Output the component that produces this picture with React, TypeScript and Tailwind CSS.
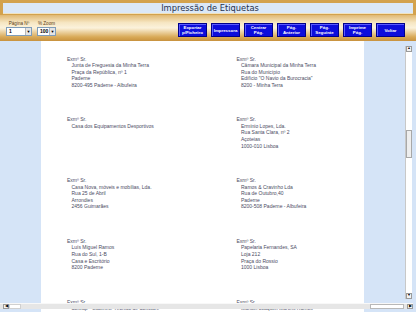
import React from "react";

type Etiqueta = string[];

const esquerda: Etiqueta[] = [
    ["Junta de Freguesia da Minha Terra", "Praça da República, nº 1", "Paderne", "8200-495 Paderne - Albufeira"],
    ["Casa dos Equipamentos Desportivos"],
    ["Casa Nova, móveis e mobílias, Lda.", "Rua 25 de Abril", "Arrondies", "2456 Guimarães"],
    ["Luís Miguel Ramos", "Rua do Sul, 1-B", "Casa e Escritório", "8200 Paderne"],
    ["Softrap - Gabinete Técnico de Software"],
];

const direita: Etiqueta[] = [
    ["Câmara Municipal da Minha Terra", "Rua do Município", "Edifício \"O Navio da Burocracia\"", "8200 - Minha Terra"],
    ["Ermínio Lopes, Lda.", "Rua Santa Clara, nº 2", "Açoteias", "1000-010 Lisboa"],
    ["Ramos & Cravinho Lda", "Rua de Outubro,40", "Paderne", "8200-508 Paderne - Albufeira"],
    ["Papelaria Fernandes, SA", "Loja 212", "Praça do Rossio", "1000 Lisboa"],
    ["Manuel Joaquim Martins Ramos"],
];

const botoes = [
    ["Exportar", "p/Ficheiro"],
    ["Impressora"],
    ["Centrar", "Pág."],
    ["Pág.", "Anterior"],
    ["Pág.", "Seguinte"],
    ["Imprime", "Pág."],
    ["Voltar"],
];

const Seletor: React.FC<{ label: string; value: string; width: string }> = ({ label, value, width }) => (
    <div className="flex flex-col items-center">
        <span className="text-[4.6px] leading-[6px] text-[#5a3a10]">{label}</span>
        <div className={`flex h-[9px] border border-[#7f9db9] bg-white ${width}`}>
            <span className="flex-1 pl-[2px] text-[5px] leading-[7px] font-bold text-black">{value}</span>
            <span className="w-[6px] bg-[#e4e4e4] border-l border-[#b8b8b8] flex items-center justify-center text-[4px] text-black">▼</span>
        </div>
    </div>
);

const Bloco: React.FC<{ linhas: Etiqueta }> = ({ linhas }) => (
    <div className="h-[60.75px]">
        <div>Exmº Sr.</div>
        {linhas.map((l, i) => (
            <div key={i} className="pl-[4.5px] whitespace-nowrap">{l}</div>
        ))}
    </div>
);

export default function App() {
    return (
        <div className="relative w-[416px] h-[312px] overflow-hidden bg-white font-['Liberation_Sans',Arial,sans-serif]">
            {/* cabeçalho */}
            <div className="h-[41px] bg-[linear-gradient(180deg,#c88f3a_0%,#d8a857_30%,#f6e6c2_55%,#fbf2dc_68%,#d9aa58_90%,#c8923e_100%)]">
                <div className="px-[3px] pt-[3px] pb-[1px] bg-[#d3a24d]">
                    <div className="h-[11px] bg-[#dbe8f7] border-b border-[#f1e3c0] flex items-center justify-center">
                        <span className="ml-[4px] font-['DejaVu_Sans',Verdana,sans-serif] text-[8.3px] leading-[10px] text-[#25324f]">
                            Impressão de Etiquetas
                        </span>
                    </div>
                </div>
                <div className="flex items-start px-[6px] pt-[6px]">
                    <div className="flex gap-[5px]">
                        <Seletor label="Página Nº" value="1" width="w-[26px]" />
                        <Seletor label="% Zoom" value="100" width="w-[19px]" />
                    </div>
                    <div className="ml-[122px] mt-[2px] flex gap-[4px]">
                        {botoes.map((b, i) => (
                            <div
                                key={i}
                                className="w-[29px] h-[14px] bg-[#0d0ddc] border border-[#00008a] shadow-[inset_1px_1px_0_#5a5aff] flex flex-col items-center justify-center text-white text-[4.4px] leading-[5px] font-bold"
                            >
                                {b.map((t, j) => (
                                    <span key={j}>{t}</span>
                                ))}
                            </div>
                        ))}
                    </div>
                </div>
            </div>

            {/* área de pré-visualização */}
            <div className="flex h-[271px]">
                <div className="w-[41px] bg-[#d5e4f7]" />
                <div className="w-[323px] bg-white pt-[14.5px] pl-[26px] flex text-[5px] leading-[6.6px] text-[#4b4b5f]">
                    <div className="w-[169.5px]">
                        {esquerda.map((e, i) => (
                            <Bloco key={i} linhas={e} />
                        ))}
                    </div>
                    <div>
                        {direita.map((e, i) => (
                            <Bloco key={i} linhas={e} />
                        ))}
                    </div>
                </div>
                <div className="flex-1 bg-[#d5e4f7] flex justify-end pr-[4px] pt-[5px] pb-[13px]">
                    <div className="w-[7px] flex flex-col bg-white border-l border-[#c8c8c8]">
                        <div className="h-[6px] border border-[#9a9a9a] bg-[#f2f2f2] flex items-center justify-center text-[3.5px] text-black">▲</div>
                        <div className="h-[78px]" />
                        <div className="h-[28px] border border-[#a8a8a8] bg-[#eeeeee]" />
                        <div className="flex-1" />
                        <div className="h-[6px] border border-[#9a9a9a] bg-[#f2f2f2] flex items-center justify-center text-[3.5px] text-black">▼</div>
                    </div>
                </div>
            </div>

            {/* barra de deslocamento horizontal */}
            <div className="absolute left-0 top-[303px] w-[413px] h-[6px] flex items-stretch bg-[#e6e6e6] border-t border-[#f8f8f8]">
                <div className="ml-[3px] w-[6px] border border-[#9a9a9a] bg-[#f2f2f2] flex items-center justify-center text-[3.5px] text-black">◀</div>
                <div className="w-[12px] bg-white border border-[#d0d0d0]" />
                <div className="flex-1" />
                <div className="w-[34px] bg-white border border-[#b8b8b8]" />
                <div className="ml-[3px] w-[6px] border border-[#9a9a9a] bg-[#f2f2f2] flex items-center justify-center text-[3.5px] text-black">▶</div>
            </div>
        </div>
    );
}
